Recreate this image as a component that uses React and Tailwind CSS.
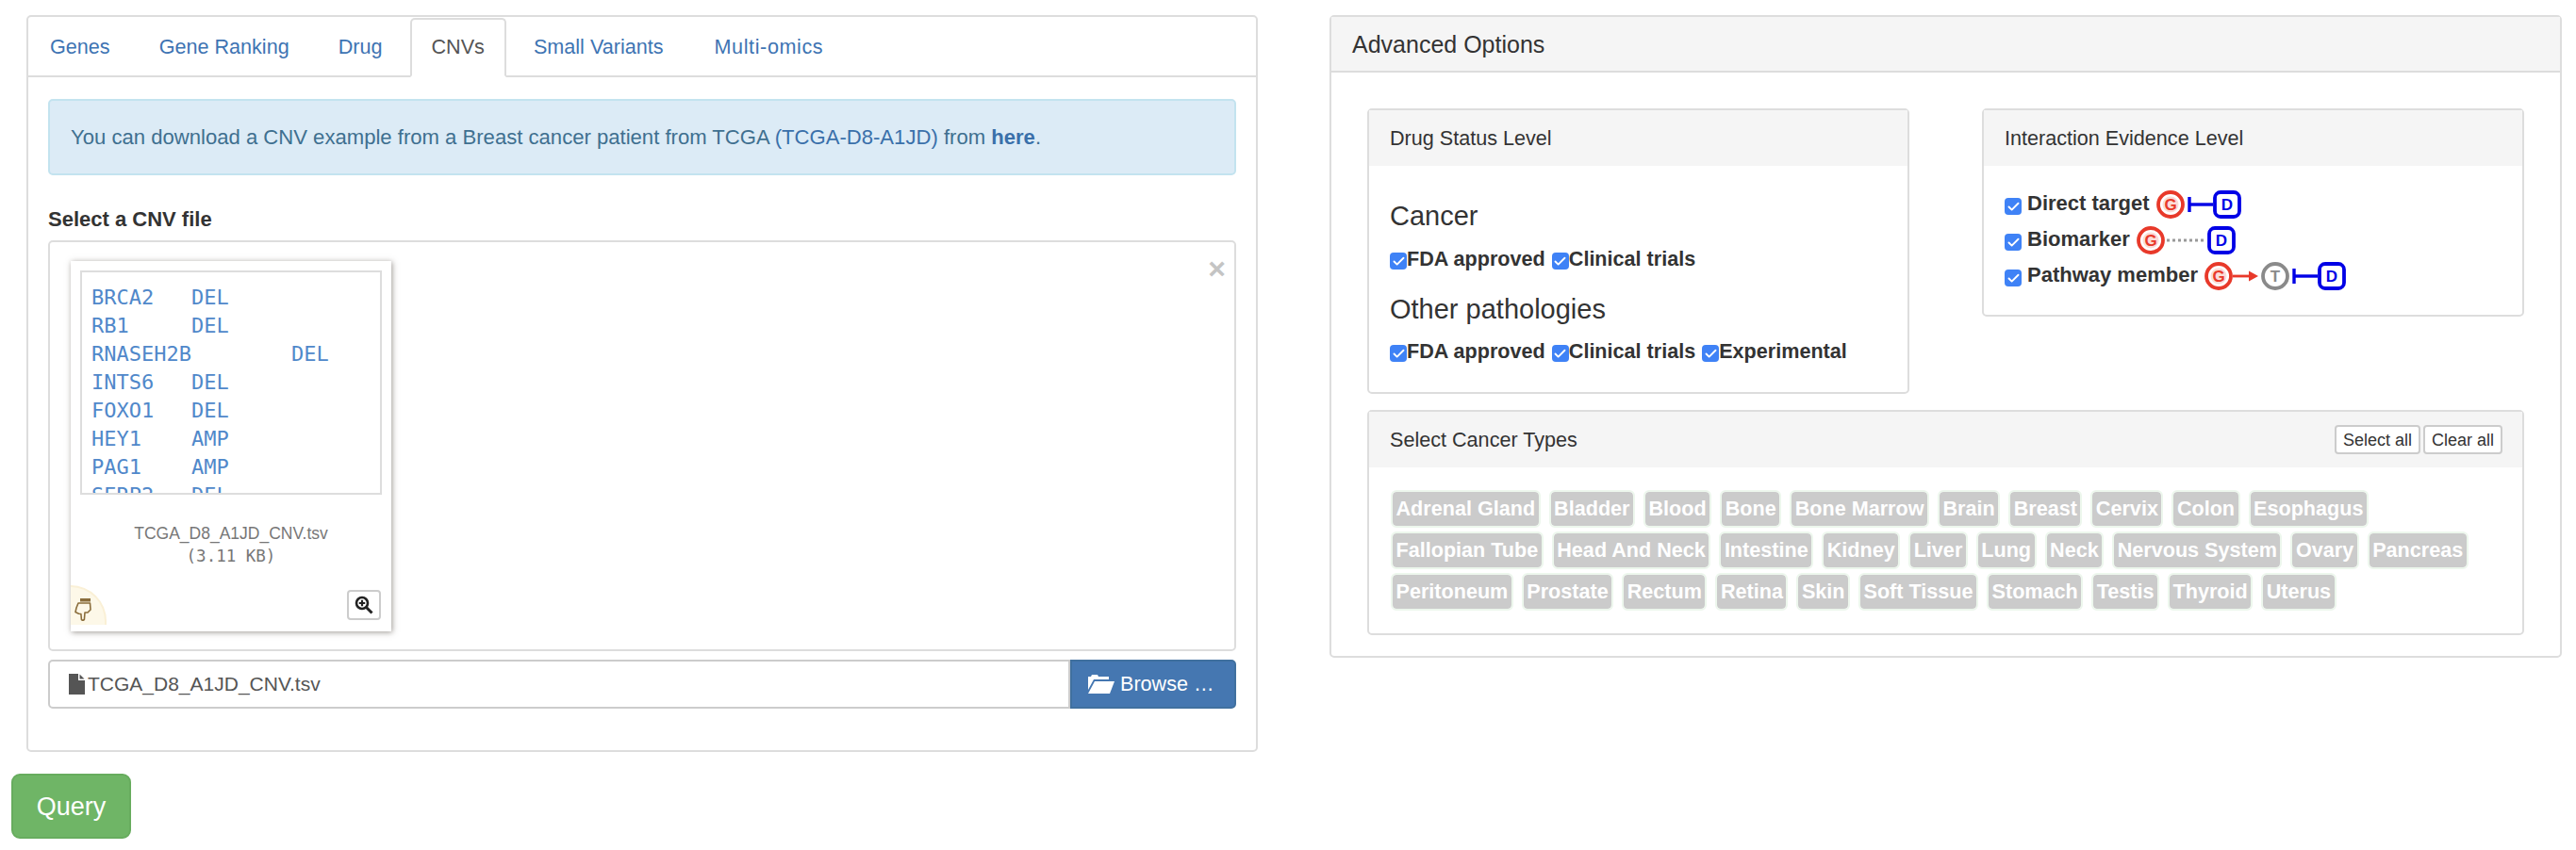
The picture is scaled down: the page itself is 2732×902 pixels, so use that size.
import { Check } from 'lucide-react'

const TABS = ['Genes', 'Gene Ranking', 'Drug', 'CNVs', 'Small Variants', 'Multi-omics']
const CNV_LINES = ['BRCA2   DEL', 'RB1     DEL', 'RNASEH2B        DEL', 'INTS6   DEL', 'FOXO1   DEL', 'HEY1    AMP', 'PAG1    AMP', 'SERP2   DEL']
const CANCER_TYPES = [
  'Adrenal Gland', 'Bladder', 'Blood', 'Bone', 'Bone Marrow', 'Brain', 'Breast', 'Cervix', 'Colon', 'Esophagus',
  'Fallopian Tube', 'Head And Neck', 'Intestine', 'Kidney', 'Liver', 'Lung', 'Neck', 'Nervous System', 'Ovary', 'Pancreas',
  'Peritoneum', 'Prostate', 'Rectum', 'Retina', 'Skin', 'Soft Tissue', 'Stomach', 'Testis', 'Thyroid', 'Uterus',
]

function Tick() {
  return (
    <span className="mt-[4px] flex h-[18px] w-[18px] shrink-0 items-center justify-center rounded-[4px] bg-[#3f82f6]">
      <Check className="h-[15px] w-[15px] text-white" strokeWidth={3} />
    </span>
  )
}

function CheckItem({ label }) {
  return (
    <span className="flex items-center font-bold text-[#333]">
      <Tick />
      {label}
    </span>
  )
}

function Gene({ x }) {
  return (
    <g>
      <circle cx={x + 15} cy="15" r="13" fill="#fff" stroke="#e8392a" strokeWidth="3.8" />
      <circle cx={x + 15} cy="15" r="8.5" fill="#fbdcd8" />
      <text x={x + 15} y="21" textAnchor="middle" fontSize="17" fontWeight="bold" fill="#e8392a">G</text>
    </g>
  )
}

function DrugNode({ x }) {
  return (
    <g>
      <rect x={x + 2} y="2" width="26" height="26" rx="6" fill="#fff" stroke="#0000e6" strokeWidth="3.8" />
      <text x={x + 15} y="21" textAnchor="middle" fontSize="17" fontWeight="bold" fill="#0000e6">D</text>
    </g>
  )
}

function TargetNode({ x }) {
  return (
    <g>
      <circle cx={x + 15} cy="15" r="13" fill="#fff" stroke="#8a8a8a" strokeWidth="3.8" />
      <text x={x + 15} y="21" textAnchor="middle" fontSize="17" fontWeight="bold" fill="#8a8a8a">T</text>
    </g>
  )
}

function Inhibit({ x }) {
  return (
    <g stroke="#0000e6" strokeWidth="3.4">
      <path d={`M${x} 7v16`} />
      <path d={`M${x} 15h25`} />
    </g>
  )
}

function DirectIcon() {
  return (
    <svg width="90" height="30" viewBox="0 0 90 30" className="ml-[7px]">
      <Gene x={0} />
      <Inhibit x={35} />
      <DrugNode x={60} />
    </svg>
  )
}

function BiomarkerIcon() {
  return (
    <svg width="105" height="30" viewBox="0 0 105 30" className="ml-[7px]">
      <Gene x={0} />
      <path d="M32 15h42" stroke="#999" strokeWidth="3" strokeDasharray="3 3" />
      <DrugNode x={75} />
    </svg>
  )
}

function PathwayIcon() {
  return (
    <svg width="150" height="30" viewBox="0 0 150 30" className="ml-[7px]">
      <Gene x={0} />
      <path d="M30 15h21" stroke="#e8392a" strokeWidth="2.8" />
      <path d="M47 9.5l10 5.5-10 5.5z" fill="#e8392a" />
      <TargetNode x={60} />
      <Inhibit x={95} />
      <DrugNode x={120} />
    </svg>
  )
}

function SubPanel({ title, className, right, children }) {
  return (
    <div className={`rounded-[5px] border-2 border-[#ddd] ${className}`}>
      <div className="flex h-[59px] items-center justify-between bg-[#f5f5f5] pl-[22px] pr-[21px] text-[#333]">
        <span>{title}</span>
        {right}
      </div>
      {children}
    </div>
  )
}

function SmallButton({ children }) {
  return (
    <button className="flex h-[31px] items-center rounded-[4px] border-2 border-[#ccc] bg-white px-[7px] text-[18px] text-[#333]">
      {children}
    </button>
  )
}

export default function App() {
  return (
    <div className="flex items-start gap-[76px] bg-white pb-[12px] pl-[12px] pt-[16px] font-['Liberation_Sans',Arial,sans-serif] text-[21.6px] leading-[30px] text-[#333]">
      {/* Left column */}
      <div className="w-[1322px]">
        <div className="ml-[16px] h-[782px] rounded-[5px] border-2 border-[#ddd]">
          <ul className="flex h-[64px] gap-[6px] border-b-2 border-[#ddd] pt-[1px]">
            {TABS.map((tab) => (
              <li
                key={tab}
                className={`h-[63px] rounded-t-[5px] border-2 px-[21px] py-[14px] ${
                  tab === 'CNVs' ? 'border-[#ddd] border-b-white bg-white text-[#555]' : 'border-transparent text-[#3e74b3]'
                } ${tab === 'Multi-omics' ? 'ml-[2px] tracking-[0.6px]' : ''}`}
              >
                {tab}
              </li>
            ))}
          </ul>

          <div className="px-[21px] pt-[23px]">
            <div className="flex h-[81px] items-center rounded-[5px] border-2 border-[#c3e3ef] bg-[#dcebf6] px-[22px] text-[22.1px] text-[#3f7090]">
              <span>
                You can download a CNV example from a Breast cancer patient from TCGA{' '}
                <span className="text-[#3a70aa]">(TCGA-D8-A1JD)</span> from <b className="text-[#3a70aa]">here</b>.
              </span>
            </div>

            <div className="mt-[32px] text-[22px] font-bold">Select a CNV file</div>

            <div className="relative mt-[7px] h-[436px] rounded-[5px] border-2 border-[#ddd] pl-[22px] pt-[20px]">
              <span className="absolute right-[9px] top-[13px] text-[32px] font-bold text-[#c4c4c4]">×</span>
              <div className="relative h-[393px] w-[340px] bg-white p-[10px] shadow-[1px_1px_6px_rgba(60,50,40,0.5)]">
                <pre className="h-[238px] overflow-hidden border-2 border-[#ddd] px-[10px] pt-[12px] font-['DejaVu_Sans_Mono',monospace] text-[22px] leading-[30px] text-[#5088ca]">
                  {CNV_LINES.join('\n')}
                </pre>
                <div className="mt-[29px] text-center text-[17.5px] leading-[24px] text-[#777]">
                  <div>TCGA_D8_A1JD_CNV.tsv</div>
                  <div className="font-['DejaVu_Sans_Mono',monospace]">(3.11 KB)</div>
                </div>
                <div className="absolute bottom-[7px] left-0 flex h-[42px] w-[38px] items-end rounded-tr-[38px] border-r-2 border-t-2 border-[#faf0d6] bg-[#fdf8e8] pb-[4px] pl-[4px]">
                  <svg width="18" height="30" viewBox="0 0 18 30" fill="none">
                    <rect x="6" y="6" width="11" height="3.5" fill="#8a6d3b" />
                    <path
                      d="M4 11h12.5l.5 7-3 3h-3l-.6 7.5-1.6 1-1.4-1-.5-6-2.4-.3L1 20.5l1-4.5 2-5z"
                      stroke="#8a6d3b"
                      strokeWidth="1.6"
                      strokeLinejoin="round"
                    />
                  </svg>
                </div>
                <button className="absolute bottom-[12px] right-[11px] flex h-[32px] w-[36px] items-center justify-center rounded-[4px] border-2 border-[#ccc] bg-white">
                  <svg width="20" height="20" viewBox="0 0 20 20" fill="none">
                    <circle cx="8" cy="8" r="6" stroke="#222" strokeWidth="2.6" />
                    <path d="M12.5 12.5l6 6" stroke="#222" strokeWidth="3" />
                    <path d="M8 4.8v6.4M4.8 8h6.4" stroke="#222" strokeWidth="2.2" />
                  </svg>
                </button>
              </div>
            </div>

            <div className="mt-[9px] flex h-[52px]">
              <div className="flex flex-1 items-center rounded-l-[5px] border-2 border-[#ccc] pl-[20px] text-[21px] text-[#555]">
                <svg width="17" height="22" viewBox="0 0 17 22" className="shrink-0" fill="#555">
                  <path d="M0 0h10v7h7v15H0z" />
                  <path d="M11.5 0.5l5 5h-5z" />
                </svg>
                <span className="ml-[3px]">TCGA_D8_A1JD_CNV.tsv</span>
              </div>
              <button className="flex w-[176px] items-center rounded-r-[5px] border-2 border-[#40709f] bg-[#4577b1] pl-[17px] text-white">
                <svg width="28" height="20" viewBox="0 0 28 20" className="shrink-0" fill="#fff">
                  <path d="M0 16V2h3l1-2h6l1 2h11v3H6z" />
                  <path d="M7 7h21l-5 13H0z" />
                </svg>
                <span className="ml-[6px]">Browse …</span>
              </button>
            </div>
          </div>
        </div>

        <button className="mt-[23px] flex h-[69px] w-[127px] items-center justify-center rounded-[9px] border-2 border-[#67ac5e] bg-[#6fb566] text-[27px] text-white">
          Query
        </button>
      </div>

      {/* Right column */}
      <div className="h-[682px] w-[1307px] rounded-[5px] border-2 border-[#ddd]">
        <div className="flex h-[59px] items-center border-b-2 border-[#ddd] bg-[#f5f5f5] pl-[22px] text-[25px]">
          Advanced Options
        </div>
        <div className="px-[38px] pt-[38px]">
          <div className="flex items-start justify-between">
            <SubPanel title="Drug Status Level" className="w-[575px]">
              <div className="px-[22px] pb-[28px] pt-[33px]">
                <h4 className="text-[29px] leading-[40px]">Cancer</h4>
                <div className="mt-[11px] flex gap-[7px]">
                  <CheckItem label="FDA approved" />
                  <CheckItem label="Clinical trials" />
                </div>
                <h4 className="mt-[18px] text-[29px] leading-[40px]">Other pathologies</h4>
                <div className="mt-[10px] flex gap-[7px]">
                  <CheckItem label="FDA approved" />
                  <CheckItem label="Clinical trials" />
                  <CheckItem label="Experimental" />
                </div>
              </div>
            </SubPanel>

            <SubPanel title="Interaction Evidence Level" className="w-[575px]">
              <div className="px-[22px] py-[22px] text-[22px] font-bold">
                <div className="flex h-[38px] items-center">
                  <Tick />
                  <span className="mb-[3px] ml-[6px]">Direct target</span>
                  <DirectIcon />
                </div>
                <div className="flex h-[38px] items-center">
                  <Tick />
                  <span className="mb-[3px] ml-[6px]">Biomarker</span>
                  <BiomarkerIcon />
                </div>
                <div className="flex h-[38px] items-center">
                  <Tick />
                  <span className="mb-[3px] ml-[6px]">Pathway member</span>
                  <PathwayIcon />
                </div>
              </div>
            </SubPanel>
          </div>

          <SubPanel
            title="Select Cancer Types"
            className="mt-[17px]"
            right={
              <div className="flex gap-[3px]">
                <SmallButton>Select all</SmallButton>
                <SmallButton>Clear all</SmallButton>
              </div>
            }
          >
            <div className="flex flex-wrap gap-x-[9px] gap-y-[4px] px-[23px] py-[24px]">
              {CANCER_TYPES.map((name) => (
                <span
                  key={name}
                  className="rounded-[6px] border-2 border-[#edf7ed] bg-[#cbcbcb] bg-clip-padding px-[3.5px] py-[3px] text-[21.6px] font-bold text-white"
                >
                  {name}
                </span>
              ))}
            </div>
          </SubPanel>
        </div>
      </div>
    </div>
  )
}
